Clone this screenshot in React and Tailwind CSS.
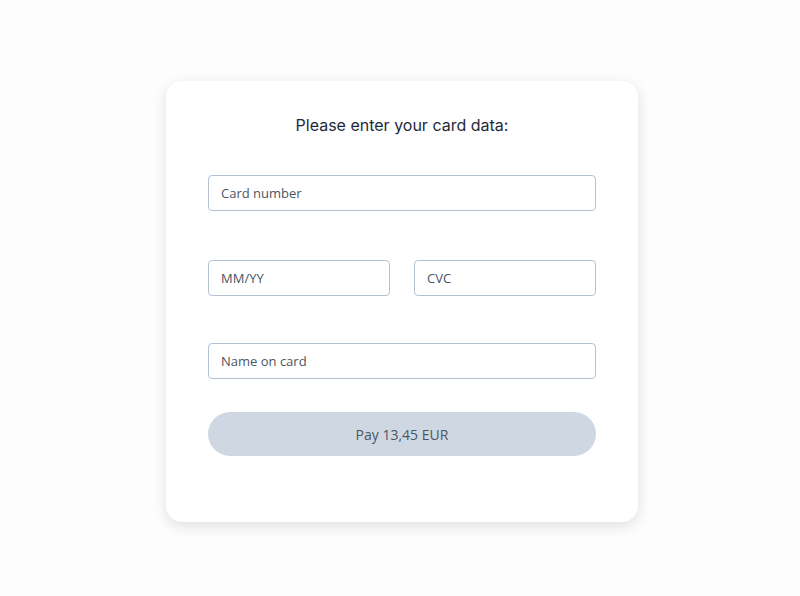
import React from 'react';

const Field = ({ placeholder, className = '' }) => (
  <input
    type="text"
    placeholder={placeholder}
    className={`h-[36px] w-full rounded-[4px] border border-[#b4c2d1] bg-white px-3 text-[13px] text-[#374151] placeholder:text-[#4b5563] outline-none font-['Open_Sans',sans-serif] ${className}`}
  />
);

const App = () => {
  return (
    <div className="min-h-[596px] w-full bg-[#fdfdfe] pt-[81px] pl-[4px]">
      <div className="mx-auto w-[472px] h-[441px] rounded-[16px] bg-white shadow-[0_4px_14px_rgba(0,0,0,0.12)] px-[42px] pt-[32px]">
        <h1 className="text-center text-[16px] leading-[24px] text-[#1e293b] font-['Inter',sans-serif]">
          Please enter your card data:
        </h1>

        <div className="mt-[38px]">
          <Field placeholder="Card number" />
        </div>

        <div className="mt-[49px] grid grid-cols-2 gap-6">
          <Field placeholder="MM/YY" />
          <Field placeholder="CVC" />
        </div>

        <div className="mt-[47px]">
          <Field placeholder="Name on card" />
        </div>

        <button
          type="button"
          className="mt-[33px] h-[44px] w-full rounded-full bg-[#cfd8e2] text-[14px] text-[#4b5563] font-['Open_Sans',sans-serif]"
        >
          Pay 13,45 EUR
        </button>
      </div>
    </div>
  );
};

export default App;
